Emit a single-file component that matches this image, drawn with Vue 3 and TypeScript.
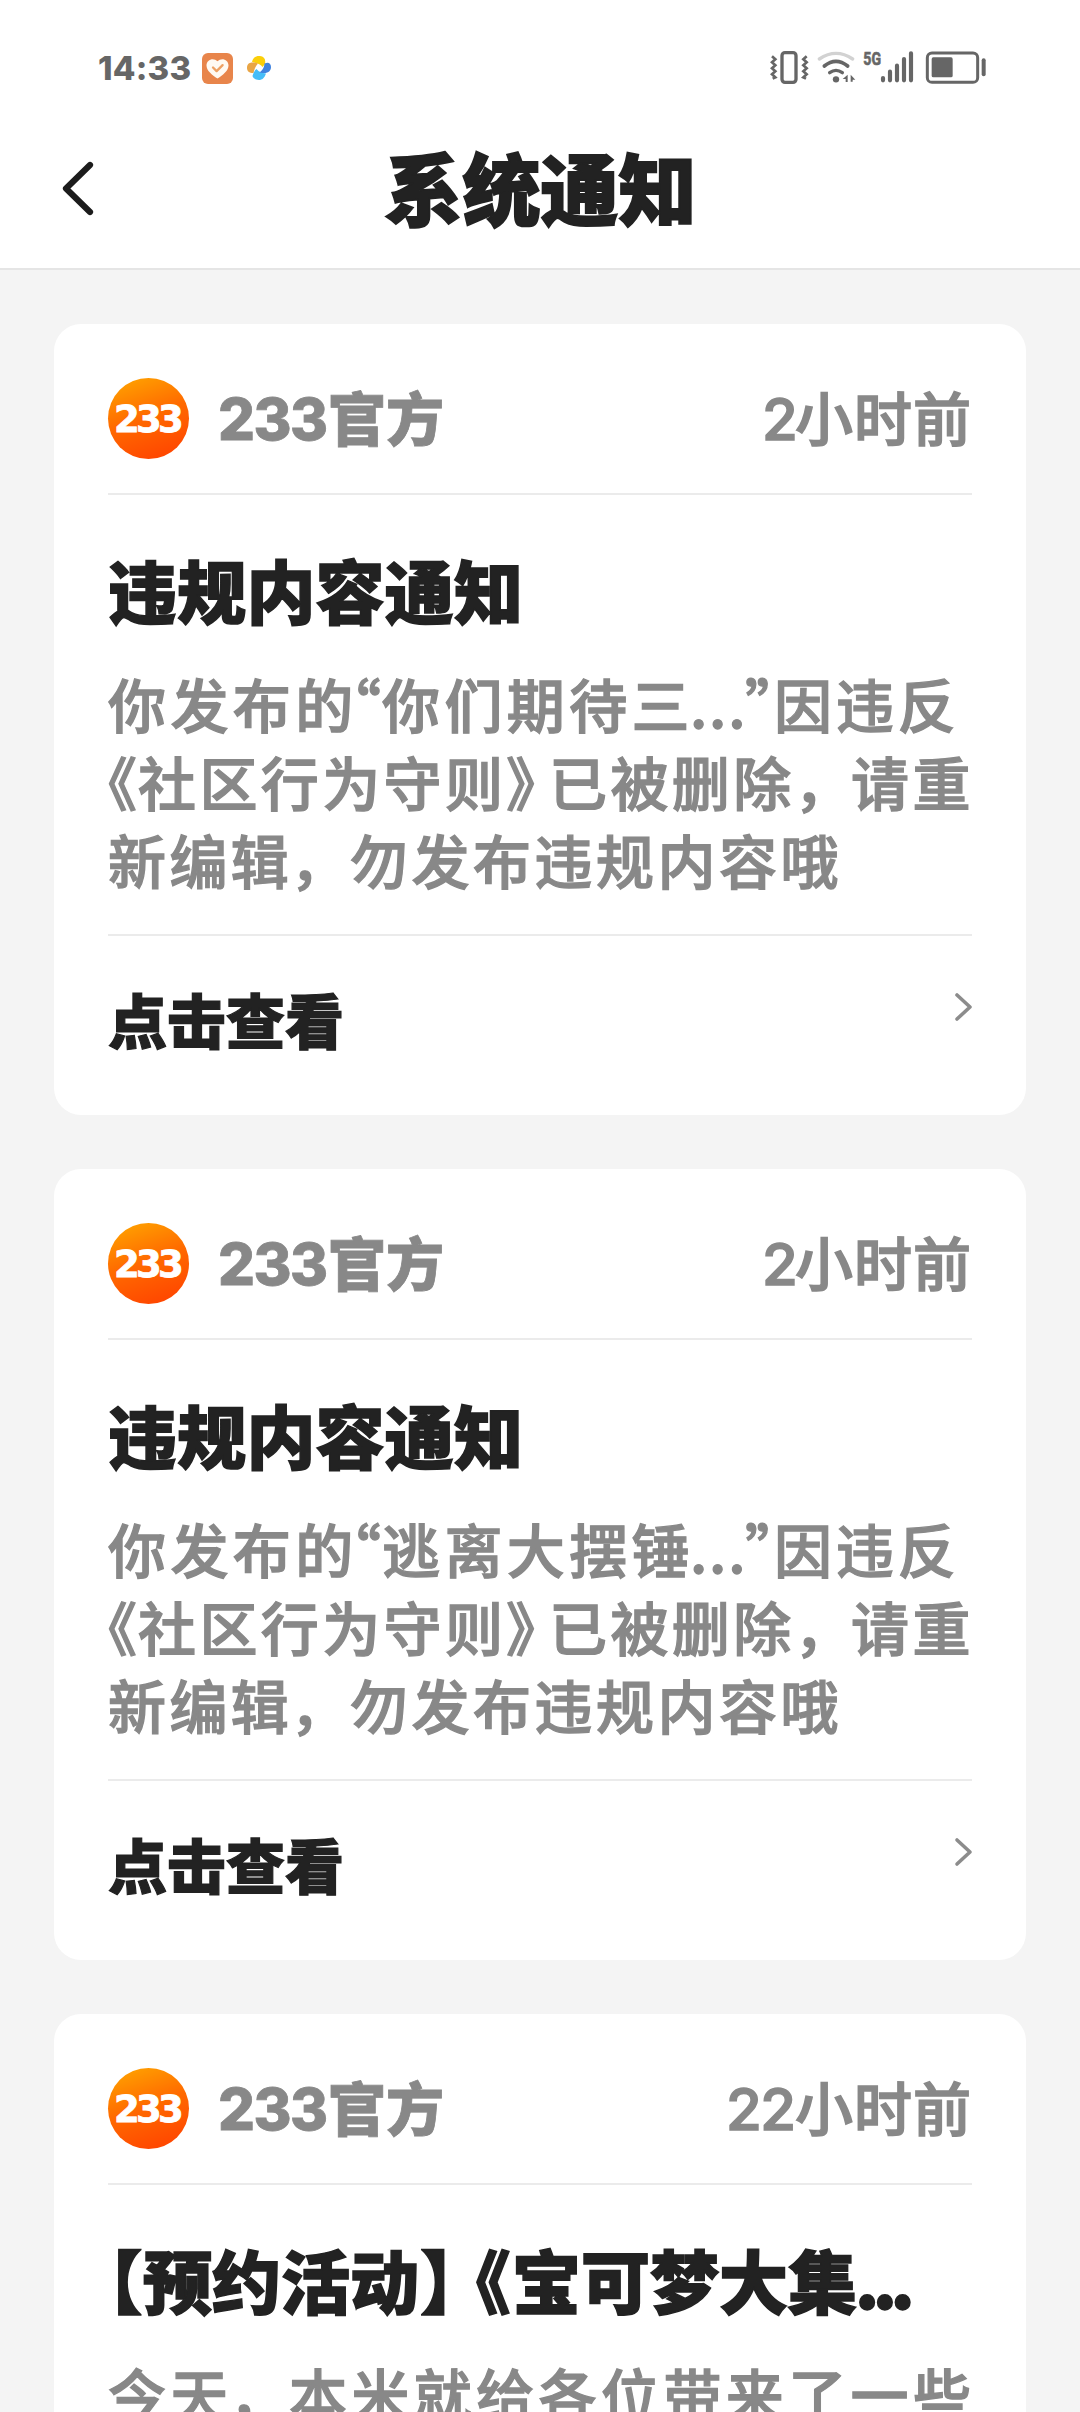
<script setup lang="ts">
interface Run {
  t: string
  w: number
  ls?: number
  dx?: number
  num?: boolean
}
interface Notice {
  time: Run[]
  title: Run[]
  lines: Run[][]
}

const tail: Run[][] = [
  [
    { t: '《', w: 30 },
    { t: '社区行为守则', w: 368, ls: 3.4 },
    { t: '》', w: 43 },
    { t: '已被删除', w: 246, ls: 3.4 },
    { t: '，', w: 56, dx: -1 },
    { t: '请重', w: 122, ls: 3.4 },
  ],
  [
    { t: '新编辑', w: 184, ls: 3.4 },
    { t: '，', w: 58, dx: -2 },
    { t: '勿发布违规内容哦', w: 500, ls: 3.5 },
  ],
]

function violation(quoted: string): Notice {
  return {
    time: [{ t: '2', w: 33, num: true }, { t: '小时前', w: 177, ls: 1 }],
    title: [{ t: '违规内容通知', w: 420, ls: 0.2 }],
    lines: [
      [
        { t: '你发布的', w: 250, ls: 4.4 },
        { t: '“', w: 24, dx: -6 },
        { t: quoted, w: 308, ls: 4.4 },
        { t: '...', w: 56, ls: 1.8 },
        { t: '”', w: 28, dx: -1 },
        { t: '因违反', w: 190, ls: 3.9 },
      ],
      ...tail,
    ],
  }
}

const notices: Notice[] = [
  violation('你们期待三'),
  violation('逃离大摆锤'),
  {
    time: [{ t: '22', w: 69, num: true }, { t: '小时前', w: 177, ls: 1 }],
    title: [
      { t: '【', w: 35 },
      { t: '预约活动', w: 277 },
      { t: '】', w: 56 },
      { t: '《', w: 36 },
      { t: '宝可梦大集', w: 345 },
      { t: '...', w: 60, ls: -6.5, dx: -2 },
    ],
    lines: [
      [
        { t: '今天', w: 124, ls: 4.2 },
        { t: '，', w: 57, dx: -3 },
        { t: '本米就给各位带来了一些', w: 690, ls: 4.4 },
      ],
    ],
  },
]

function runStyle(r: Run) {
  return {
    width: r.w + 'px',
    letterSpacing: r.ls === undefined ? undefined : r.ls + 'px',
    textIndent: (r.dx ?? 0) + 'px',
  }
}
</script>

<template>
  <div class="screen" lang="zh-CN">
    <div class="status">
      <span class="clock">14:33</span>
      <svg class="app-heart" viewBox="0 0 31 31">
        <rect width="31" height="31" rx="6" fill="#e8854b" />
        <path d="M15.5 25.5C10 22 4.5 17.500 4.500 12.500C4.500 6.500 11.500 4 15.500 8.300C19.500 4 26.500 6.500 26.500 12.500C26.500 17.500 21 22 15.500 25.500Z" fill="#fffaf3" />
        <path d="M11 14.500l3.600 3.600 6-6" fill="none" stroke="#eda164" stroke-width="2.300" stroke-linecap="round" stroke-linejoin="round" />
      </svg>
      <svg class="app-wheel" viewBox="0 0 26 26">
        <path d="M6 7C7 2 11 .5 14 1C18 1.500 20 4 19 9L16.500 12C15 9.500 11 8 6 7Z" fill="#fbcf0a" />
        <path d="M1 13C1 8.500 4 6 12 8.500C9.500 11 8.500 14 7.500 18C3 18 1 16 1 13Z" fill="#e9a545" />
        <path d="M6.500 21C7.500 17.500 8.500 15.500 10.500 14C13 17 16 18 20 18.500C18.500 23 16 25 13 25C9.500 25 7 23 6.500 21Z" fill="#45bdf8" />
        <path d="M18.500 8.500C22.500 6.500 25 8.500 25 12C25 16 22 19.500 13.500 17.500C17 15 18 12.500 18.500 8.500Z" fill="#3f83e0" />
      </svg>
      <svg class="system" viewBox="0 0 750 180" fill="none" stroke="#666">
        <rect x="96" y="38" width="42" height="89" rx="9" stroke-width="10" />
        <path d="M66 49l10 9-10 9 10 9-10 9 10 9-10 9 10 9-8 4M170 49l-10 9 10 9-10 9 10 9-10 9 10 9-10 9 8 4" stroke-width="8" />
        <path d="M208 57Q258 23 308 57" stroke="#d2d2d2" stroke-width="10" stroke-linecap="round" />
        <path d="M223 78Q258 50 293 78" stroke-width="11" stroke-linecap="round" />
        <path d="M239 98Q258 84 277 98" stroke-width="10" stroke-linecap="round" />
        <circle cx="258" cy="118" r="9.500" fill="#666" stroke="none" />
        <path d="M293 104v22h-6v-9h-9zM302 104l14 15h-8v6h-6z" fill="#666" stroke="none" />
        <text class="net" x="340" y="75" textLength="53" lengthAdjust="spacingAndGlyphs">5G</text>
        <path d="M399 114v7M420 95v26M441 77v44M462 57v64M483 40v81" stroke-width="12.500" stroke-linecap="round" />
        <rect x="532" y="39" width="151" height="88" rx="14" stroke-width="9" />
        <rect x="545" y="52" width="63" height="60" rx="5" fill="#666" stroke="none" />
        <path d="M701 61v42" stroke-width="12" stroke-linecap="round" />
      </svg>
    </div>

    <header class="bar">
      <svg class="back" viewBox="0 0 36 60">
        <path d="M30 6L6 29.500L30 53" fill="none" stroke="#1c1c1c" stroke-width="6.200" stroke-linecap="round" stroke-linejoin="round" />
      </svg>
      <h1>系统通知</h1>
    </header>

    <main class="list">
      <article v-for="(n, i) in notices" :key="i" class="card">
        <div class="head">
          <svg class="avatar" viewBox="0 0 81 81">
            <defs>
              <linearGradient :id="'g' + i" x1="0.2" y1="0" x2="0.55" y2="1">
                <stop offset="0" stop-color="#ffa200" />
                <stop offset="0.5" stop-color="#ff6a00" />
                <stop offset="1" stop-color="#ff4800" />
              </linearGradient>
            </defs>
            <circle cx="40.500" cy="40.500" r="40.500" :fill="'url(#g' + i + ')'" />
            <text class="logo" x="6" y="53.500">233</text>
          </svg>
          <span class="name"><span class="digits">233</span><span>官方</span></span>
          <span class="time"><span v-for="(r, k) in n.time" :key="k" class="run" :class="{ num: r.num }" :style="runStyle(r)">{{ r.t }}</span></span>
        </div>
        <h2><span v-for="(r, k) in n.title" :key="k" class="run" :style="runStyle(r)">{{ r.t }}</span></h2>
        <div class="body">
          <p v-for="(line, l) in n.lines" :key="l"><span v-for="(r, k) in line" :key="k" class="run" :style="runStyle(r)">{{ r.t }}</span></p>
        </div>
        <div class="foot">
          <span>点击查看</span>
          <svg class="go" viewBox="0 0 20 32">
            <path d="M4 4L17 16L4 28" fill="none" stroke="#8c8c8c" stroke-width="3.600" stroke-linecap="round" stroke-linejoin="round" />
          </svg>
        </div>
      </article>
    </main>
  </div>
</template>

<style>
body {
  background: #f4f4f4;
}
</style>

<style scoped>
.screen {
  width: 1080px;
  height: 2412px;
  overflow: hidden;
  background: #f4f4f4;
  color: #222;
  font-family: "Noto Sans CJK SC", "Noto Sans", sans-serif;
  font-feature-settings: "halt";
  display: flex;
  flex-direction: column;
}
h1, h2, p {
  margin: 0;
}
.status {
  flex: none;
  height: 112px;
  background: #fff;
  display: flex;
  align-items: flex-start;
  box-sizing: border-box;
  padding: 40px 80px 0 98px;
}
.clock {
  width: 104px;
  line-height: 56px;
  font-family: Inter, sans-serif;
  font-weight: 800;
  font-size: 33px;
  letter-spacing: 0.200px;
  color: #666;
}
.app-heart {
  width: 31px;
  height: 31px;
  margin-top: 13px;
}
.app-wheel {
  width: 26px;
  height: 26px;
  margin: 15px 0 0 13px;
}
.system {
  width: 250px;
  height: 60px;
  margin-left: auto;
}
.net {
  font: 700 54px Roboto, sans-serif;
  fill: #666;
  stroke: #666;
  stroke-width: 2;
}
.bar {
  flex: none;
  height: 156px;
  background: #fff;
  border-bottom: 2px solid #e5e5e5;
  display: flex;
  align-items: center;
}
.back {
  width: 36px;
  height: 60px;
  margin: -2px 0 0 60px;
}
h1 {
  flex: 1;
  margin: -8px 95px 0 0;
  text-align: center;
  font-size: 78px;
  line-height: 100px;
  font-weight: 900;
  -webkit-text-stroke: 1.800px #222;
}
.list {
  padding: 54px 54px 0;
  display: flex;
  flex-direction: column;
  gap: 54px;
}
.card {
  flex: none;
  height: 791px;
  box-sizing: border-box;
  padding: 0 54px;
  border-radius: 27px;
  background: #fff;
}
.head {
  display: flex;
  align-items: center;
  height: 169px;
  border-bottom: 2px solid #ebebeb;
}
.avatar {
  width: 81px;
  height: 81px;
  margin-top: 20px;
  overflow: visible;
}
.logo {
  font: 700 37px "DejaVu Sans", sans-serif;
  letter-spacing: -3.700px;
  fill: #fff;
  stroke: #fff;
  stroke-width: 0.800;
}
.name, .time {
  margin-top: 14px;
  line-height: 80px;
  font-size: 58px;
  color: #888;
  display: flex;
}
.name {
  margin-left: 29px;
  font-weight: 900;
  -webkit-text-stroke: 0.800px #888;
}
.digits {
  display: block;
  width: 110px;
  padding-top: 3px;
  margin-bottom: -3px;
  font-family: Inter, sans-serif;
  font-weight: 800;
  letter-spacing: -1.600px;
}
.time {
  margin-left: auto;
  font-weight: 500;
  -webkit-text-stroke: 1.500px #888;
}
.run {
  display: block;
  flex: none;
  white-space: pre;
}
.num {
  padding-top: 3px;
  margin-bottom: -3px;
  font-family: Inter, sans-serif;
  font-weight: 500;
  letter-spacing: -1.500px;
}
h2 {
  display: flex;
  margin-top: 49px;
  font-size: 69px;
  line-height: 90px;
  font-weight: 900;
  -webkit-text-stroke: 1.500px #222;
}
.body {
  height: 234px;
  margin-top: 30px;
}
.body p {
  display: flex;
  font-size: 58px;
  line-height: 78px;
  font-weight: 500;
  color: #888;
  -webkit-text-stroke: 1.300px #888;
}
.foot {
  display: flex;
  justify-content: space-between;
  align-items: flex-start;
  margin-top: 36px;
  border-top: 2px solid #ebebeb;
  padding-top: 43px;
  font-size: 59px;
  line-height: 80px;
  font-weight: 900;
  -webkit-text-stroke: 1.200px #222;
}
.go {
  width: 20px;
  height: 32px;
  margin: 12px -1px 0 0;
}
</style>
